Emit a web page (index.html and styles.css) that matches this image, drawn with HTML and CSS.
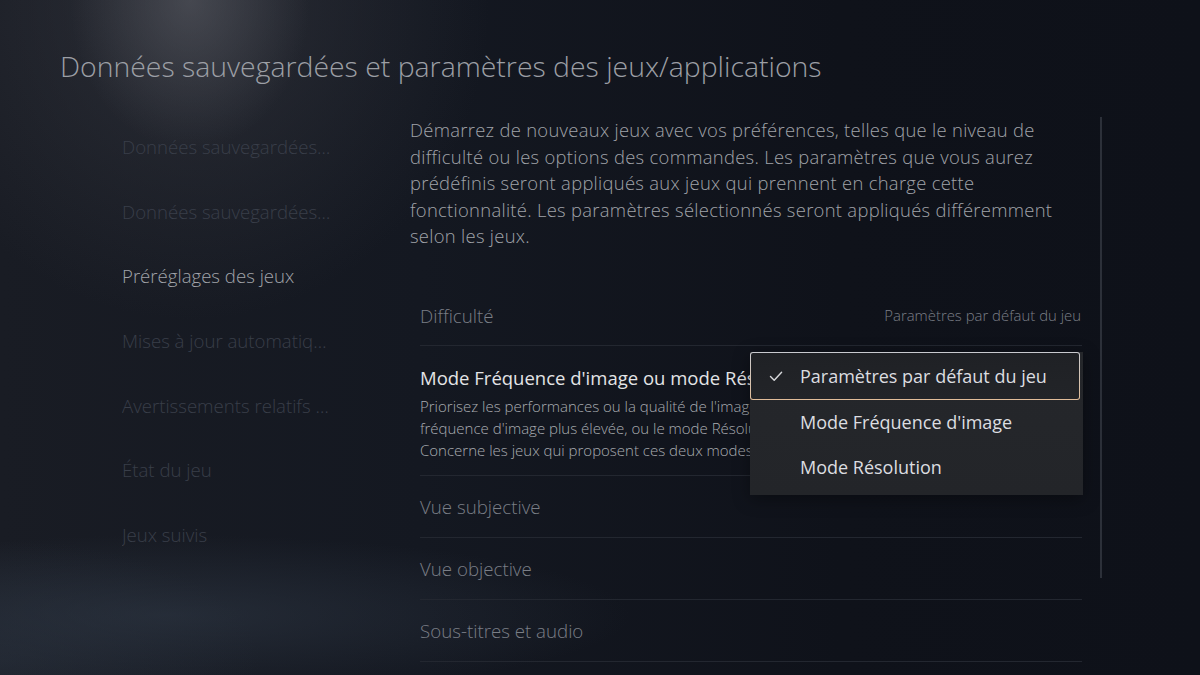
FILE: index.html
```html
<!DOCTYPE html>
<html lang="fr">
<head>
<meta charset="utf-8">
<title>Données sauvegardées et paramètres des jeux/applications</title>
<link rel="stylesheet" href="styles.css">
</head>
<body>
<div class="screen">
  <h1 class="title">Données sauvegardées et paramètres des jeux/applications</h1>
  <div class="main">
    <nav class="nav">
      <div class="nav-item">Données sauvegardées (PS5)</div>
      <div class="nav-item">Données sauvegardées (PS4)</div>
      <div class="nav-item active">Préréglages des jeux</div>
      <div class="nav-item">Mises à jour automatiques</div>
      <div class="nav-item">Avertissements relatifs au contenu</div>
      <div class="nav-item">État du jeu</div>
      <div class="nav-item">Jeux suivis</div>
    </nav>
    <section class="content">
      <p class="intro">Démarrez de nouveaux jeux avec vos préférences, telles que le niveau de difficulté ou les options des commandes. Les paramètres que vous aurez prédéfinis seront appliqués aux jeux qui prennent en charge cette fonctionnalité. Les paramètres sélectionnés seront appliqués différemment selon les jeux.</p>
      <ul class="rows">
        <li class="row">
          <span class="row-label">Difficulté</span>
          <span class="row-value">Paramètres par défaut du jeu</span>
        </li>
        <li class="row row-open">
          <div class="row-text">
            <span class="row-label strong">Mode Fréquence d'image ou mode Résolution</span>
            <p class="row-desc">Priorisez les performances ou la qualité de l'image. Choisissez le mode<br>fréquence d'image plus élevée, ou le mode Résolution pour une image plus nette.<br>Concerne les jeux qui proposent ces deux modes.</p>
          </div>
          <div class="menu">
            <div class="menu-item selected">
              <svg class="check" viewBox="0 0 16 16" width="16" height="16"><path d="M2.5 8.6 L6.2 12.2 L13.6 4.2" fill="none" stroke="#d8d9dc" stroke-width="1.4" stroke-linecap="round" stroke-linejoin="round"/></svg>
              <span>Paramètres par défaut du jeu</span>
            </div>
            <div class="menu-item"><span>Mode Fréquence d'image</span></div>
            <div class="menu-item"><span>Mode Résolution</span></div>
          </div>
        </li>
        <li class="row"><span class="row-label">Vue subjective</span></li>
        <li class="row"><span class="row-label">Vue objective</span></li>
        <li class="row"><span class="row-label">Sous-titres et audio</span></li>
      </ul>
    </section>
    <div class="scrollbar"><div class="thumb"></div></div>
  </div>
</div>
</body>
</html>
```
FILE: styles.css
```css
html, body {
  margin: 0;
  padding: 0;
}

body {
  width: 1200px;
  height: 675px;
  overflow: hidden;
  font-family: "Open Sans", "Noto Sans", sans-serif;
  font-weight: 300;
  color: #9b9ea4;
  background:
    radial-gradient(ellipse 120px 150px at 190px 0px, rgba(96, 98, 106, 0.5), rgba(96, 98, 106, 0) 100%),
    radial-gradient(ellipse 300px 320px at 190px 0px, rgba(58, 60, 68, 0.55), rgba(58, 60, 68, 0) 100%),
    radial-gradient(ellipse 460px 80px at 170px 615px, rgba(50, 60, 74, 0.5), rgba(50, 60, 74, 0) 100%),
    radial-gradient(ellipse 260px 120px at 0px 660px, rgba(40, 48, 60, 0.5), rgba(40, 48, 60, 0) 100%),
    linear-gradient(90deg, #191c24 0%, #141821 35%, #0f121a 70%, #0e1119 100%);
}

.screen {
  height: 675px;
  display: flex;
  flex-direction: column;
  padding-top: 48px;
  box-sizing: border-box;
}

.title {
  margin: 0 0 0 60px;
  font-size: 28.4px;
  line-height: 36px;
  font-weight: 300;
  color: #9c9fa5;
  white-space: nowrap;
}

.main {
  margin-top: 31px;
  display: flex;
  flex: 1;
}

/* left column of sections */
.nav {
  width: 288px;
  padding-left: 122px;
  flex-shrink: 0;
}

.nav-item {
  height: 64.67px;
  line-height: 64.67px;
  font-size: 18.6px;
  color: #393e49;
  width: 210px;
  overflow: hidden;
  white-space: nowrap;
  text-overflow: ellipsis;
}

.nav-item.active {
  color: #a1a4aa;
}

/* right column */
.content {
  width: 672px;
  flex-shrink: 0;
}

.intro {
  margin: 2px 0 0 0;
  font-size: 18.4px;
  letter-spacing: 0.3px;
  line-height: 26.5px;
  color: #a0a3a9;
  width: 645px;
}

.rows {
  list-style: none;
  margin: 36px 0 0 10px;
  padding: 0;
}

.row {
  height: 61px;
  border-bottom: 1px solid #232730;
  display: flex;
  align-items: center;
  justify-content: space-between;
}

.row:first-child {
  height: 59px;
}

.row-label {
  font-size: 18.7px;
  color: #7a7e86;
}

.row-value {
  font-size: 14.9px;
  color: #7b7f87;
  margin-right: 1px;
}

.row-open {
  position: relative;
  height: auto;
  display: block;
  padding: 20px 0 14px 0;
}

.row-label.strong {
  display: block;
  font-size: 18.5px;
  line-height: 24px;
  color: #e3e4e6;
  font-weight: 400;
  white-space: nowrap;
  overflow: hidden;
  width: 330px;
}

.row-desc {
  margin: 5px 0 0 0;
  font-size: 15px;
  line-height: 22px;
  color: #a9acb1;
  white-space: nowrap;
  overflow: hidden;
  width: 330px;
}

/* popup list over the row */
.menu {
  position: absolute;
  left: 330px;
  top: 6px;
  width: 333px;
  padding-bottom: 5px;
  background: linear-gradient(180deg, #25272b 0%, #232529 100%);
  box-shadow: 0 4px 16px rgba(0, 0, 0, 0.35);
}

.menu-item {
  height: 45px;
  display: flex;
  align-items: center;
  padding-left: 50px;
  font-size: 18px;
  font-weight: 400;
  color: #dcdde0;
  position: relative;
}

.menu-item.selected {
  height: 46px;
  margin-right: 3px;
  border: 1px solid transparent;
  border-radius: 3px;
  padding-left: 49px;
  background:
    linear-gradient(#1f2125, #222428) padding-box,
    linear-gradient(180deg, #c8cacf 0%, #d6c3b0 60%, #e0bc98 100%) border-box;
}

.check {
  position: absolute;
  left: 17px;
  top: 15px;
}

/* vertical scroll indicator */
.scrollbar {
  margin-left: 18px;
  width: 2px;
  padding-top: 2px;
}

.thumb {
  width: 2px;
  height: 461px;
  background: #2c3039;
}
```
